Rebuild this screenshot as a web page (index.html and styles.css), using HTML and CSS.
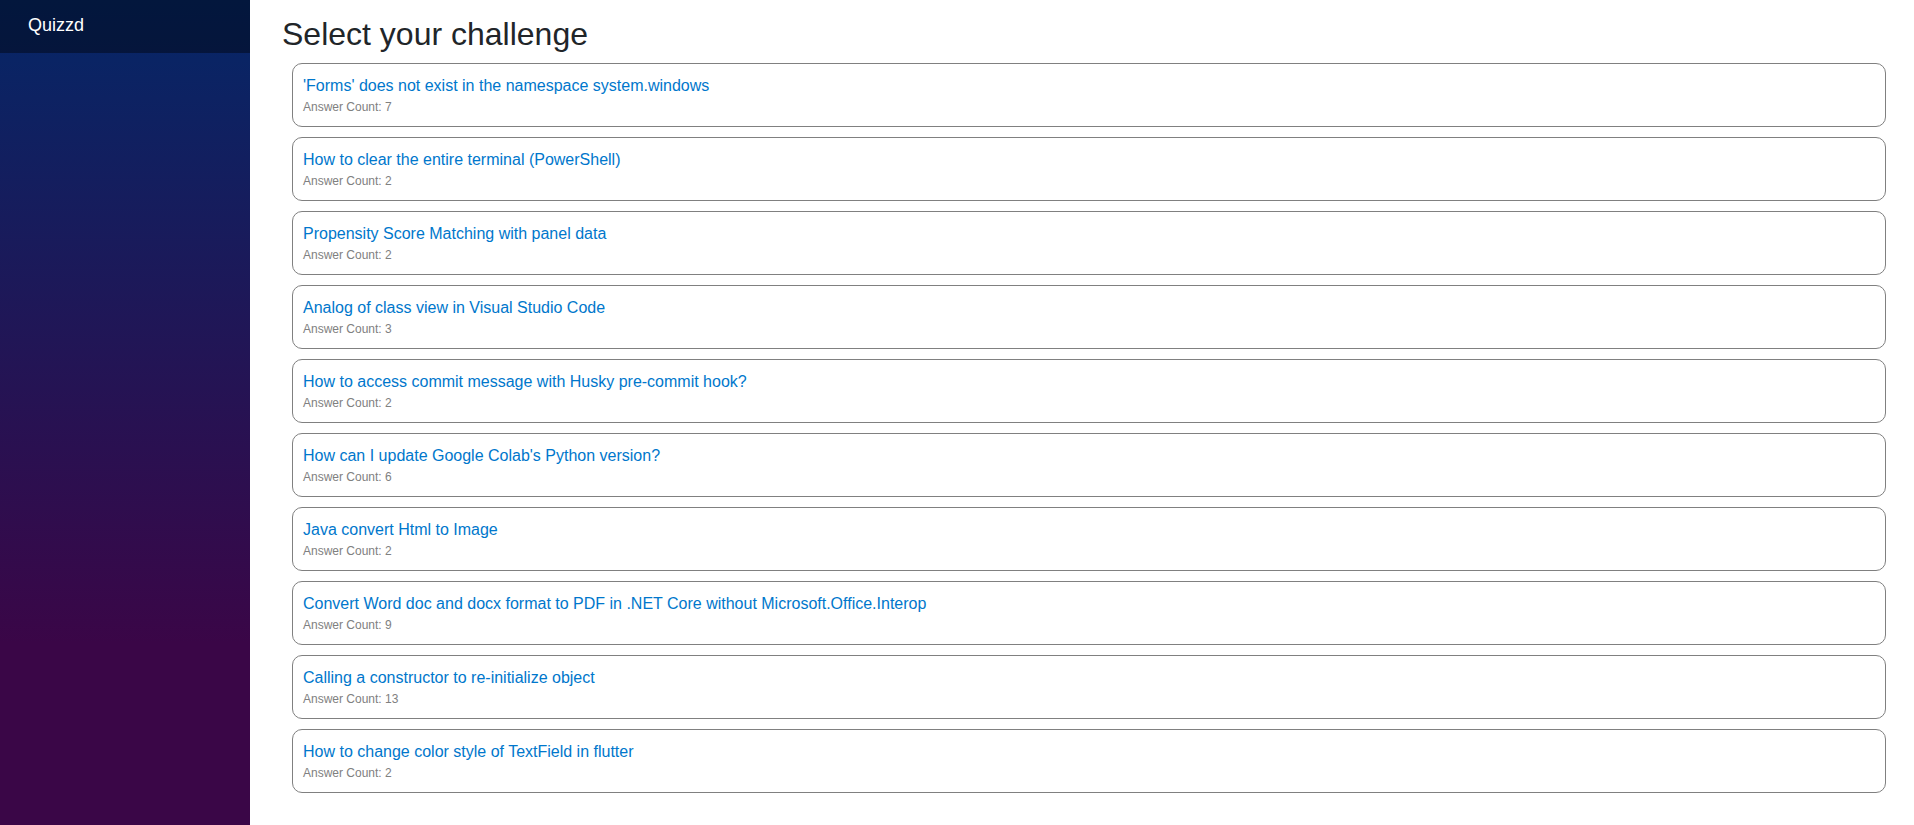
FILE: index.html
```
<!DOCTYPE html>
<html lang="en">
<head>
    <meta charset="UTF-8">
    <meta name="viewport" content="width=device-width, initial-scale=1.0">
    <title>Quizzd</title>
    <link rel="stylesheet" href="styles.css">
</head>
<body>
    <div class="page">
        <div class="sidebar">
            <div class="top-row">
                <a class="navbar-brand" href="index.html">Quizzd</a>
            </div>
        </div>
        <main>
            <h1>Select your challenge</h1>
            <div class="questions">
                <div class="question">
                    <a href="#">'Forms' does not exist in the namespace system.windows</a>
                    <p>Answer Count: 7</p>
                </div>
                <div class="question">
                    <a href="#">How to clear the entire terminal (PowerShell)</a>
                    <p>Answer Count: 2</p>
                </div>
                <div class="question">
                    <a href="#">Propensity Score Matching with panel data</a>
                    <p>Answer Count: 2</p>
                </div>
                <div class="question">
                    <a href="#">Analog of class view in Visual Studio Code</a>
                    <p>Answer Count: 3</p>
                </div>
                <div class="question">
                    <a href="#">How to access commit message with Husky pre-commit hook?</a>
                    <p>Answer Count: 2</p>
                </div>
                <div class="question">
                    <a href="#">How can I update Google Colab's Python version?</a>
                    <p>Answer Count: 6</p>
                </div>
                <div class="question">
                    <a href="#">Java convert Html to Image</a>
                    <p>Answer Count: 2</p>
                </div>
                <div class="question">
                    <a href="#">Convert Word doc and docx format to PDF in .NET Core without Microsoft.Office.Interop</a>
                    <p>Answer Count: 9</p>
                </div>
                <div class="question">
                    <a href="#">Calling a constructor to re-initialize object</a>
                    <p>Answer Count: 13</p>
                </div>
                <div class="question">
                    <a href="#">How to change color style of TextField in flutter</a>
                    <p>Answer Count: 2</p>
                </div>
            </div>
        </main>
    </div>
</body>
</html>
```
FILE: styles.css
```
body {
    font-family: "Liberation Sans", Arial, sans-serif;
    font-size: 16px;
    line-height: 24px;
    margin: 0;
    color: #212529;
    background-color: #fff;
}
.page {
    display: flex;
    min-height: 100vh;
}
.sidebar {
    width: 250px;
    flex-shrink: 0;
    background-image: linear-gradient(180deg, rgb(5, 39, 103) 0%, #3a0647 78%);
}
.top-row {
    background-color: rgba(0, 0, 0, 0.4);
    padding: 13px 28px 16px;
}
.navbar-brand {
    display: block;
    color: white;
    font-size: 18px;
    text-decoration: none;
}
main {
    flex: 1;
    padding: 15px 18px 0 32px;
}
h1 {
    margin: 0;
    font-size: 32px;
    font-weight: normal;
    line-height: 38px;
}
.questions {
    display: flex;
    flex-direction: column;
    gap: 10px;
    padding: 10px;
}
.question {
    border: 1px solid gray;
    border-radius: 10px;
    padding: 10px;
}
.question a {
    display: block;
    color: #0077cc;
    text-decoration: none;
}
.question a:hover {
    text-decoration: underline;
}
.question p {
    margin: 0;
    color: gray;
    font-size: 12px;
    line-height: 18px;
}
```
